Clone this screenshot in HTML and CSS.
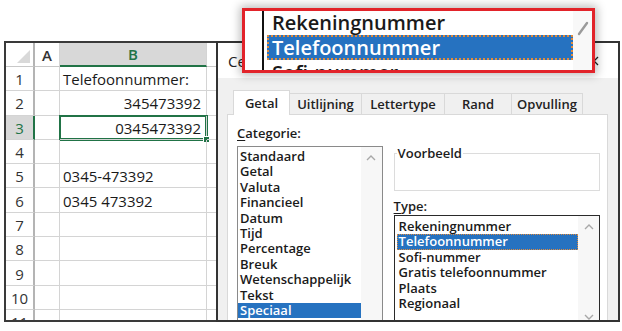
FILE: index.html
```html
<!DOCTYPE html>
<html lang="nl">
<head>
    <meta charset="UTF-8">
    <title>Celeigenschappen - Telefoonnummer</title>
    <link rel="stylesheet" href="styles.css">
</head>
<body>
<div class="scene">

    <div class="sheet">
        <div class="grid">
            <div class="corner"><span class="corner-tri"></span></div>
            <div class="colhead">A</div>
            <div class="colhead is-active">B</div>
            <div class="colhead last"></div>

            <div class="rowhead">1</div><div class="cell"></div><div class="cell">Telefoonnummer:</div><div class="cell last"></div>
            <div class="rowhead">2</div><div class="cell"></div><div class="cell num">345473392</div><div class="cell last"></div>
            <div class="rowhead is-active">3</div><div class="cell"></div><div class="cell num is-selected">0345473392<span class="fill-handle"></span></div><div class="cell last"></div>
            <div class="rowhead">4</div><div class="cell"></div><div class="cell"></div><div class="cell last"></div>
            <div class="rowhead">5</div><div class="cell"></div><div class="cell">0345-473392</div><div class="cell last"></div>
            <div class="rowhead">6</div><div class="cell"></div><div class="cell">0345 473392</div><div class="cell last"></div>
            <div class="rowhead">7</div><div class="cell"></div><div class="cell"></div><div class="cell last"></div>
            <div class="rowhead">8</div><div class="cell"></div><div class="cell"></div><div class="cell last"></div>
            <div class="rowhead">9</div><div class="cell"></div><div class="cell"></div><div class="cell last"></div>
            <div class="rowhead">10</div><div class="cell"></div><div class="cell"></div><div class="cell last"></div>
            <div class="rowhead">11</div><div class="cell"></div><div class="cell"></div><div class="cell last"></div>
        </div>
    </div>

    <div class="dialog">
        <div class="titlebar">
            <span class="title">Celeigenschappen</span>
            <svg class="close" width="10" height="10" viewBox="0 0 10 10"><path d="M1 1 L9 9 M9 1 L1 9" stroke="#222" stroke-width="1.3"/></svg>
        </div>
        <div class="dlg-body">
            <div class="tabs">
                <div class="tab is-active" style="width:57px">Getal</div>
                <div class="tab" style="width:73px">Uitlijning</div>
                <div class="tab" style="width:84px">Lettertype</div>
                <div class="tab" style="width:68px">Rand</div>
                <div class="tab" style="width:72px">Opvulling</div>
            </div>
            <div class="panel">
                <div class="col-left">
                    <div class="label"><u>C</u>ategorie:</div>
                    <div class="listbox cat-list">
                        <ul class="items">
                            <li>Standaard</li>
                            <li>Getal</li>
                            <li>Valuta</li>
                            <li>Financieel</li>
                            <li>Datum</li>
                            <li>Tijd</li>
                            <li>Percentage</li>
                            <li>Breuk</li>
                            <li>Wetenschappelijk</li>
                            <li>Tekst</li>
                            <li class="is-selected">Speciaal</li>
                        </ul>
                        <div class="scrollbar">
                            <svg width="10" height="7" viewBox="0 0 10 7"><polyline points="1,6 5,2 9,6" fill="none" stroke="#a8a8a8" stroke-width="1.4"/></svg>
                        </div>
                    </div>
                </div>
                <div class="col-right">
                    <fieldset class="preview"><legend>Voorbeeld</legend></fieldset>
                    <div class="label"><u>T</u>ype:</div>
                    <div class="listbox type-list">
                        <ul class="items">
                            <li>Rekeningnummer</li>
                            <li class="is-selected focus">Telefoonnummer</li>
                            <li>Sofi-nummer</li>
                            <li>Gratis telefoonnummer</li>
                            <li>Plaats</li>
                            <li>Regionaal</li>
                        </ul>
                        <div class="scrollbar">
                            <svg width="10" height="7" viewBox="0 0 10 7"><polyline points="1,6 5,2 9,6" fill="none" stroke="#a8a8a8" stroke-width="1.4"/></svg>
                            <svg width="10" height="7" viewBox="0 0 10 7"><polyline points="1,1 5,5 9,1" fill="none" stroke="#a8a8a8" stroke-width="1.4"/></svg>
                        </div>
                    </div>
                </div>
            </div>
        </div>
    </div>

    <div class="callout">
        <div class="callout-gutter"></div>
        <div class="callout-list">
            <ul class="callout-items">
                <li>Rekeningnummer</li>
                <li class="is-selected">Telefoonnummer</li>
                <li>Sofi-nummer</li>
            </ul>
            <div class="callout-scroll">
                <svg width="12" height="16" viewBox="0 0 12 16"><path d="M2 14 L10 3" stroke="#9a9a9a" stroke-width="2.4" stroke-linecap="round"/></svg>
            </div>
        </div>
    </div>

</div>
</body>
</html>
```

FILE: styles.css
```css
* { box-sizing: border-box; }

body {
    margin: 0;
    background: #fff;
    font-family: "Open Sans", "Liberation Sans", sans-serif;
    color: #1c1c1c;
}

.scene {
    position: relative;
    width: 622px;
    height: 331px;
    padding: 41px 0 0 4px;
    display: flex;
    align-items: flex-start;
    overflow: hidden;
}

/* ---------- spreadsheet ---------- */

.sheet {
    width: 212px;
    height: 281px;
    border: 2px solid #3a3a3a;
    border-right: none;
    overflow: hidden;
    background: #fff;
}

.grid {
    display: grid;
    grid-template-columns: 29px 25px 147px 9px;
    grid-template-rows: 24px;
    grid-auto-rows: 24.3px;
    font-size: 15px;
}

.corner, .colhead {
    background: #f3f3f3;
    border-bottom: 1px solid #c8c8c8;
    border-right: 1px solid #d4d4d4;
}

.corner {
    position: relative;
    border-right: 2px solid #b4b4b4;
    background: #fff;
}
.corner-tri {
    position: absolute;
    right: 3px;
    bottom: 3px;
    width: 0;
    height: 0;
    border-left: 13px solid transparent;
    border-bottom: 13px solid #d9d9d9;
}

.colhead {
    display: flex;
    align-items: center;
    justify-content: center;
    font-weight: 600;
    color: #333;
    background: #fff;
}
.colhead.is-active {
    background: #d8d8d8;
    color: #217346;
    border-bottom: 2px solid #217346;
}
.colhead.last { border-right: none; }

.rowhead {
    display: flex;
    align-items: center;
    justify-content: center;
    padding-top: 1px;
    color: #333;
    border-right: 2px solid #b4b4b4;
    border-bottom: 1px solid #d4d4d4;
    background: #fff;
}
.rowhead.is-active {
    background: #d8d8d8;
    color: #217346;
    border-right-color: #217346;
}

.cell {
    position: relative;
    display: flex;
    align-items: center;
    padding: 1px 3px 0 3px;
    border-right: 1px solid #d4d4d4;
    border-bottom: 1px solid #d4d4d4;
    white-space: nowrap;
    color: #1a1a1a;
}
.cell.num { justify-content: flex-end; padding-right: 5px; }
.cell.last { border-right: none; }
.cell.is-selected {
    box-shadow: 0 0 0 1px #217346, inset 0 0 0 1px #217346;
}
.fill-handle {
    position: absolute;
    right: -4px;
    bottom: -4px;
    width: 7px;
    height: 7px;
    background: #217346;
    border: 1px solid #fff;
}

/* ---------- dialog ---------- */

.dialog {
    width: 404px;
    height: 281px;
    border: 2px solid #333;
    display: flex;
    flex-direction: column;
    overflow: hidden;
    background: #f0f0f0;
}

.titlebar {
    height: 35px;
    flex: none;
    background: #fff;
    display: flex;
    align-items: center;
    justify-content: space-between;
    padding: 0 19px 0 10px;
    font-size: 15px;
    color: #222;
}

.dlg-body {
    flex: 1;
    display: flex;
    flex-direction: column;
    padding: 12px 10px 0 9px;
    overflow: hidden;
}

.tabs {
    display: flex;
    align-items: flex-end;
    height: 24px;
    padding-left: 6px;
    flex: none;
}
.tab {
    height: 21px;
    display: flex;
    align-items: center;
    justify-content: center;
    font-size: 13px;
    font-weight: 600;
    color: #222;
    background: #f0f0f0;
    border: 1px solid #d9d9d9;
    border-bottom: none;
    margin-left: -1px;
}
.tab.is-active {
    height: 25px;
    background: #fff;
    margin-bottom: -1px;
    position: relative;
    margin-left: 0;
}

.panel {
    flex: none;
    height: 260px;
    background: #fff;
    border: 1px solid #d9d9d9;
    display: flex;
    gap: 11px;
    padding: 10px 7px 0 9px;
}

.label {
    font-size: 13px;
    font-weight: 600;
    line-height: 16px;
    color: #1c1c1c;
}
.label u { text-underline-offset: 2px; }

.col-left {
    width: 146px;
    display: flex;
    flex-direction: column;
}
.col-left .label { margin-bottom: 5px; }

.col-right {
    width: 207px;
    display: flex;
    flex-direction: column;
}

.preview {
    margin: 20px 0 0 0;
    padding: 0;
    height: 46px;
    min-width: 0;
    border: 1px solid #dcdcdc;
}
.preview legend {
    margin-left: 2px;
    padding: 0 1px;
    font-size: 13px;
    font-weight: 600;
    line-height: 16px;
    color: #1c1c1c;
}
.col-right .label { margin-top: 7px; margin-bottom: 1px; }

.listbox {
    display: flex;
    background: #fff;
    border: 1px solid #8a8a8a;
}
.cat-list { height: 190px; padding-top: 2px; }
.type-list {
    height: 114px;
    border-color: #2a2a2a;
    padding: 3px 0 0 2px;
}

.items {
    list-style: none;
    margin: 0;
    padding: 0;
    flex: 1;
    font-size: 13px;
    font-weight: 600;
    line-height: 15.4px;
    color: #1a1a1a;
}
.items li {
    padding-left: 2px;
    white-space: nowrap;
}
.items li.is-selected {
    background: #2672c0;
    color: #fff;
}
.items li.focus { outline: 1px dotted #e08a3c; outline-offset: -1px; }

.scrollbar {
    width: 21px;
    flex: none;
    background: #f7f7f7;
    display: flex;
    flex-direction: column;
    align-items: center;
    justify-content: space-between;
    padding: 7px 0 7px;
}
.cat-list .scrollbar { margin-top: -2px; justify-content: flex-start; }
.type-list .scrollbar { margin-top: -3px; }

/* ---------- zoomed callout ---------- */

.callout {
    position: absolute;
    left: 242px;
    top: 8px;
    width: 353px;
    height: 65px;
    border: 3px solid #e2232a;
    background: #fff;
    box-shadow: 0 0 9px 2px rgba(0, 0, 0, 0.28);
    display: flex;
    overflow: hidden;
}
.callout-gutter { width: 17px; flex: none; }
.callout-list {
    flex: 1;
    display: flex;
    border-left: 2px solid #111;
    padding-left: 3px;
}
.callout-items {
    list-style: none;
    margin: -1px 0 0 0;
    padding: 0;
    width: 306px;
    font-size: 20px;
    font-weight: 600;
    line-height: 25px;
    color: #1a1a1a;
}
.callout-items li { padding-left: 5px; white-space: nowrap; }
.callout-items li.is-selected {
    background: #2672c0;
    color: #fff;
    outline: 2px dotted #e08a3c;
    outline-offset: -2px;
}
.callout-scroll {
    flex: 1;
    background: #f8f8f8;
    display: flex;
    justify-content: center;
    padding-top: 9px;
}
```
